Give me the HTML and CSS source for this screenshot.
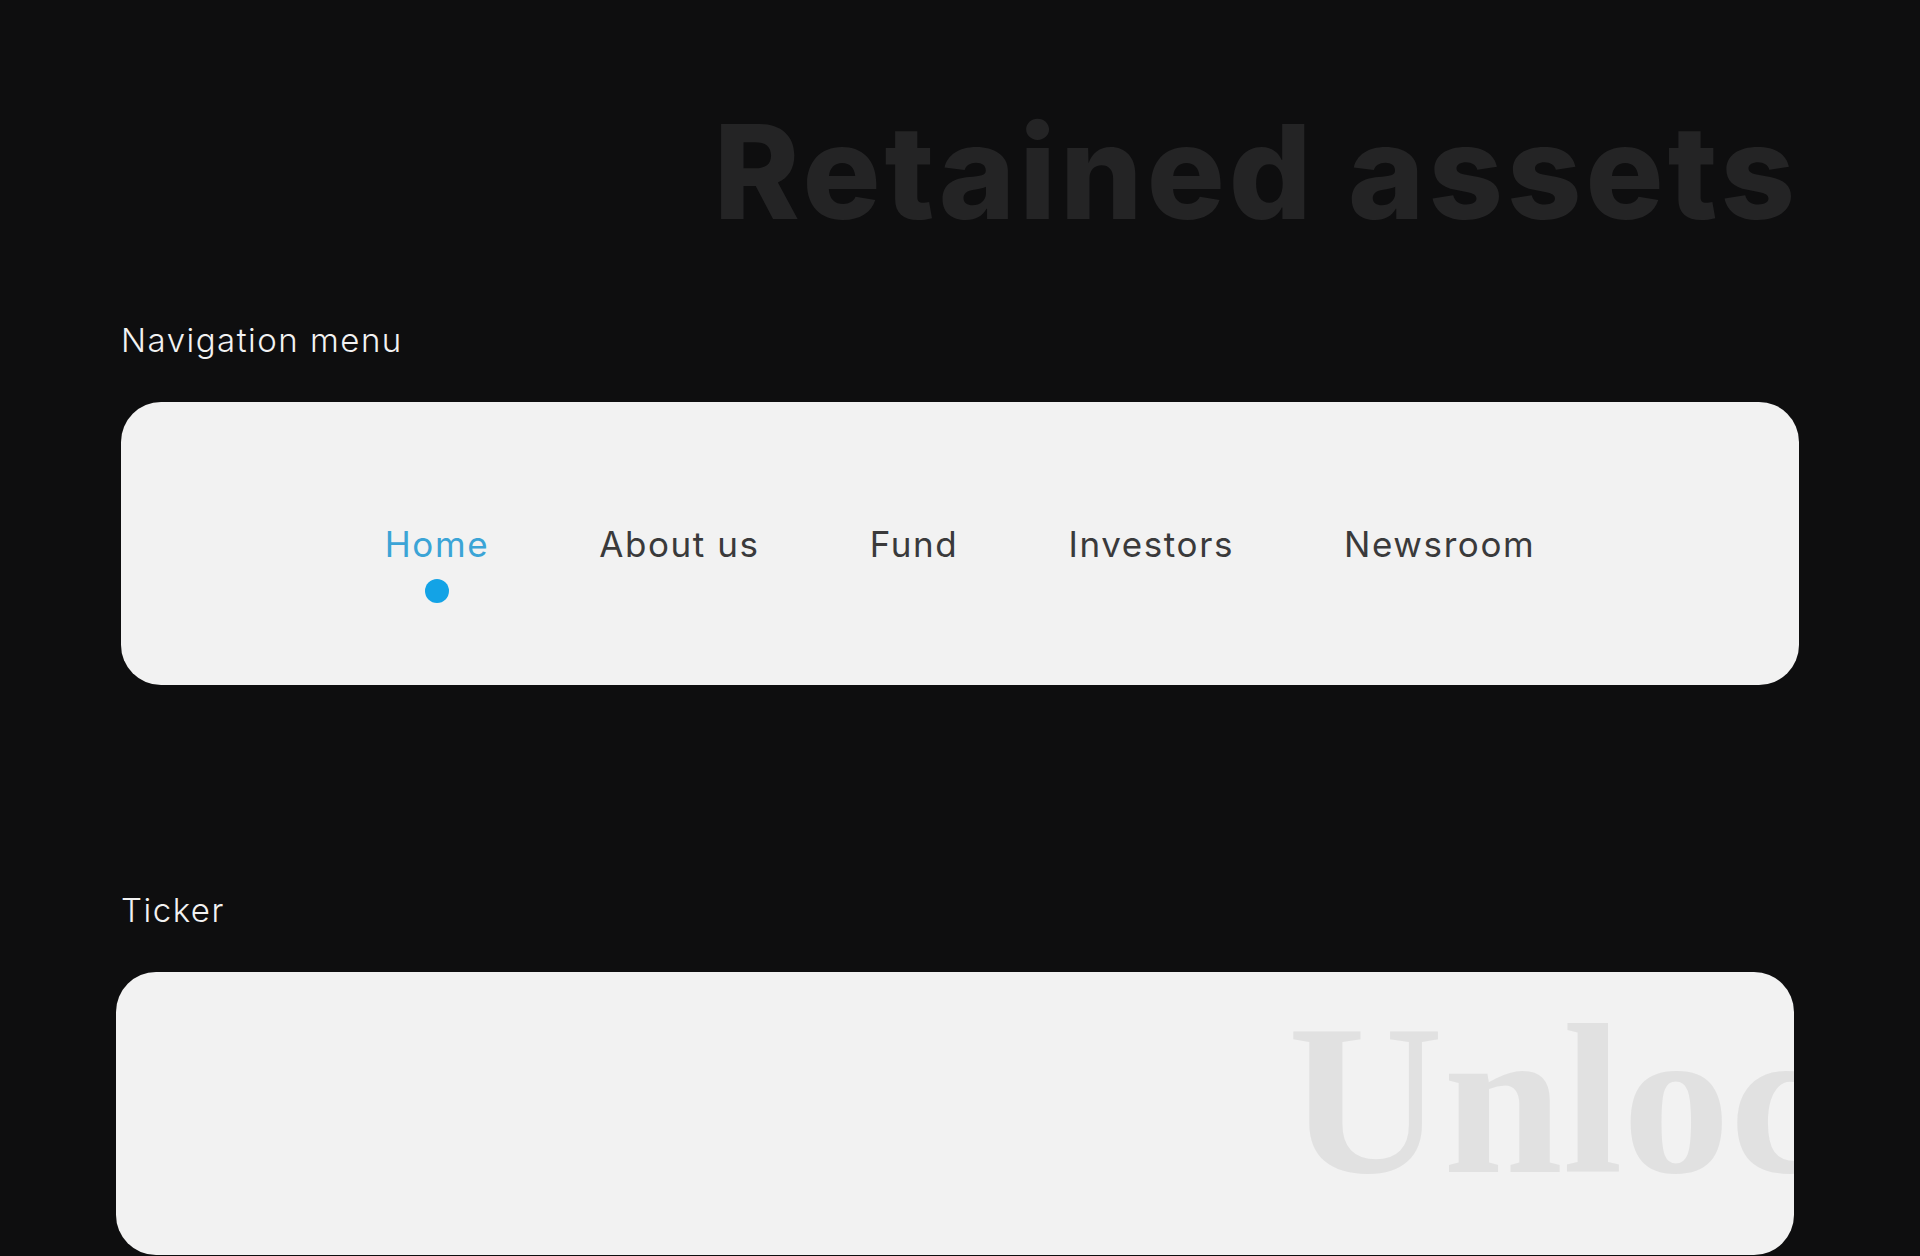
FILE: index.html
```html
<!DOCTYPE html>
<html lang="en">
<head>
    <meta charset="UTF-8">
    <meta name="viewport" content="width=device-width, initial-scale=1.0">
    <title>Retained assets</title>
    <link rel="stylesheet" href="styles.css">
</head>
<body>
    <div class="page">
        <h1 class="page-title">Retained assets</h1>

        <section class="asset">
            <h2 class="asset-label">Navigation menu</h2>
            <nav class="card nav-card">
                <a href="#" class="nav-link active">Home</a>
                <a href="#" class="nav-link">About us</a>
                <a href="#" class="nav-link">Fund</a>
                <a href="#" class="nav-link">Investors</a>
                <a href="#" class="nav-link">Newsroom</a>
            </nav>
        </section>

        <section class="asset ticker-section">
            <h2 class="asset-label">Ticker</h2>
            <div class="card ticker-card">
                <div class="ticker-track">
                    <span class="ticker-item">Unlock</span>
                </div>
            </div>
        </section>
    </div>
</body>
</html>
```

FILE: styles.css
```css
body {
    margin: 0;
    background-color: #0e0e0f;
    font-family: Inter, "Noto Sans", sans-serif;
    overflow: hidden;
}

.page {
    padding: 107px 121px 0 121px;
}

.page-title {
    margin: 0;
    font-size: 130px;
    font-weight: 800;
    line-height: 1;
    letter-spacing: 4px;
    text-align: right;
    color: #242425;
}

.asset {
    margin-top: 83px;
}

.ticker-section {
    margin-top: 205px;
}

.asset-label {
    margin: 0 0 42px 0;
    font-size: 33px;
    font-weight: 300;
    line-height: 40px;
    letter-spacing: 1.5px;
    color: #f2f2f2;
}

.card {
    background-color: #f2f2f2;
    border-radius: 40px;
    height: 283px;
    box-sizing: border-box;
}

.nav-card {
    display: flex;
    justify-content: center;
    align-items: center;
    gap: 110px;
}

.nav-link {
    position: relative;
    font-size: 35px;
    line-height: 40px;
    color: #3a3a3b;
    text-decoration: none;
    letter-spacing: 1.6px;
}

.nav-link.active {
    color: #3ba4d6;
}

/* active marker under the current link */
.nav-link.active::after {
    content: "";
    position: absolute;
    top: 55px;
    left: 50%;
    width: 24px;
    height: 24px;
    margin-left: -12px;
    border-radius: 50%;
    background-color: #13a3e6;
}

.ticker-card {
    margin: 0 5px 0 -5px;
    overflow: hidden;
}

.ticker-track {
    display: flex;
    padding: 20px 0 0 1172px;
    white-space: nowrap;
}

.ticker-item {
    font-family: "Liberation Serif", "DejaVu Serif", serif;
    font-weight: 700;
    font-size: 215px;
    line-height: 1;
    color: #e1e1e1;
}
```
